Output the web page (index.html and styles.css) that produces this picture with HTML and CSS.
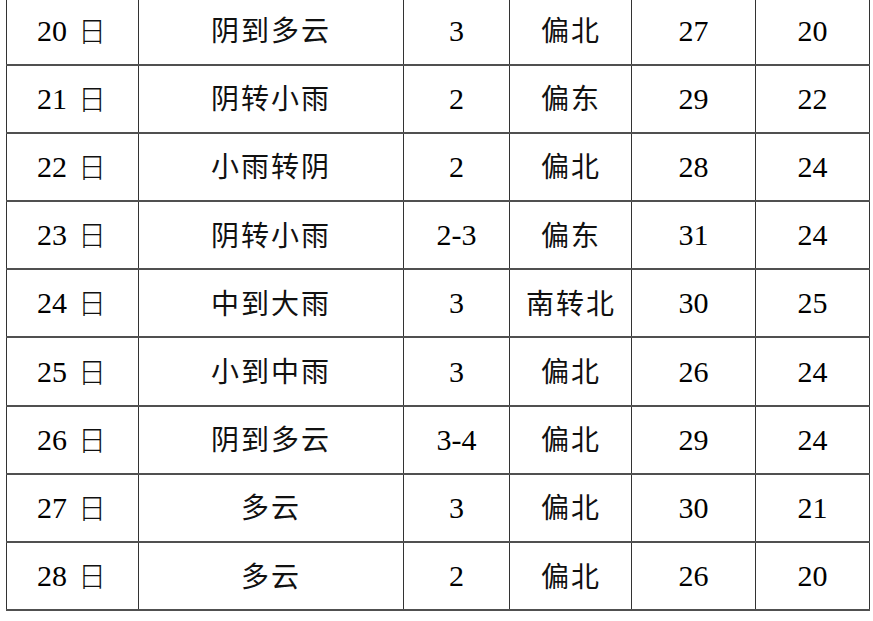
FILE: index.html
```html
<!DOCTYPE html>
<html lang="zh-CN">
<head>
<meta charset="utf-8">
<title>天气预报</title>
<link rel="stylesheet" href="styles.css">
</head>
<body>
<table class="forecast">
  <colgroup>
    <col class="c-date"><col class="c-weather"><col class="c-wind"><col class="c-dir"><col class="c-high"><col class="c-low">
  </colgroup>
  <tbody>
    <tr><td><span class="num">20</span> <span class="cn day">日</span></td><td class="cn">阴到多云</td><td class="num">3</td><td class="cn">偏北</td><td class="num">27</td><td class="num">20</td></tr>
    <tr><td><span class="num">21</span> <span class="cn day">日</span></td><td class="cn">阴转小雨</td><td class="num">2</td><td class="cn">偏东</td><td class="num">29</td><td class="num">22</td></tr>
    <tr><td><span class="num">22</span> <span class="cn day">日</span></td><td class="cn">小雨转阴</td><td class="num">2</td><td class="cn">偏北</td><td class="num">28</td><td class="num">24</td></tr>
    <tr><td><span class="num">23</span> <span class="cn day">日</span></td><td class="cn">阴转小雨</td><td class="num">2-3</td><td class="cn">偏东</td><td class="num">31</td><td class="num">24</td></tr>
    <tr><td><span class="num">24</span> <span class="cn day">日</span></td><td class="cn">中到大雨</td><td class="num">3</td><td class="cn">南转北</td><td class="num">30</td><td class="num">25</td></tr>
    <tr><td><span class="num">25</span> <span class="cn day">日</span></td><td class="cn">小到中雨</td><td class="num">3</td><td class="cn">偏北</td><td class="num">26</td><td class="num">24</td></tr>
    <tr><td><span class="num">26</span> <span class="cn day">日</span></td><td class="cn">阴到多云</td><td class="num">3-4</td><td class="cn">偏北</td><td class="num">29</td><td class="num">24</td></tr>
    <tr><td><span class="num">27</span> <span class="cn day">日</span></td><td class="cn">多云</td><td class="num">3</td><td class="cn">偏北</td><td class="num">30</td><td class="num">21</td></tr>
    <tr><td><span class="num">28</span> <span class="cn day">日</span></td><td class="cn">多云</td><td class="num">2</td><td class="cn">偏北</td><td class="num">26</td><td class="num">20</td></tr>
  </tbody>
</table>
</body>
</html>
```

FILE: styles.css
```css
html, body {
  margin: 0;
  padding: 0;
  background: #ffffff;
}

body {
  overflow: hidden;
}

.forecast {
  margin: -2.5px 0 0 6px;
  border-collapse: collapse;
  table-layout: fixed;
  width: 863px;
  font-size: 28px;
  color: #111111;
}

.c-date { width: 132px; }
.c-weather { width: 265px; }
.c-wind { width: 106px; }
.c-dir { width: 122px; }
.c-high { width: 124px; }
.c-low { width: 114px; }

.forecast td {
  height: 66.2px;
  padding: 0;
  text-align: center;
  vertical-align: middle;
  border-left: 1px solid #333333;
  border-right: 1px solid #333333;
  border-bottom: 2px solid #505050;
  line-height: 1;
  font-family: "Liberation Serif", "Times New Roman", serif;
  word-spacing: 4px;
}

.forecast td.cn {
  padding-top: 3px;
  height: 63.2px;
}

.num {
  font-family: "Liberation Serif", "Times New Roman", serif;
  font-size: 30px;
  font-weight: 400;
  color: #000000;
}

.cn {
  font-family: "Noto Sans CJK SC", sans-serif;
  font-weight: 300;
  letter-spacing: 2px;
}

.day {
  vertical-align: -1px;
}
```
